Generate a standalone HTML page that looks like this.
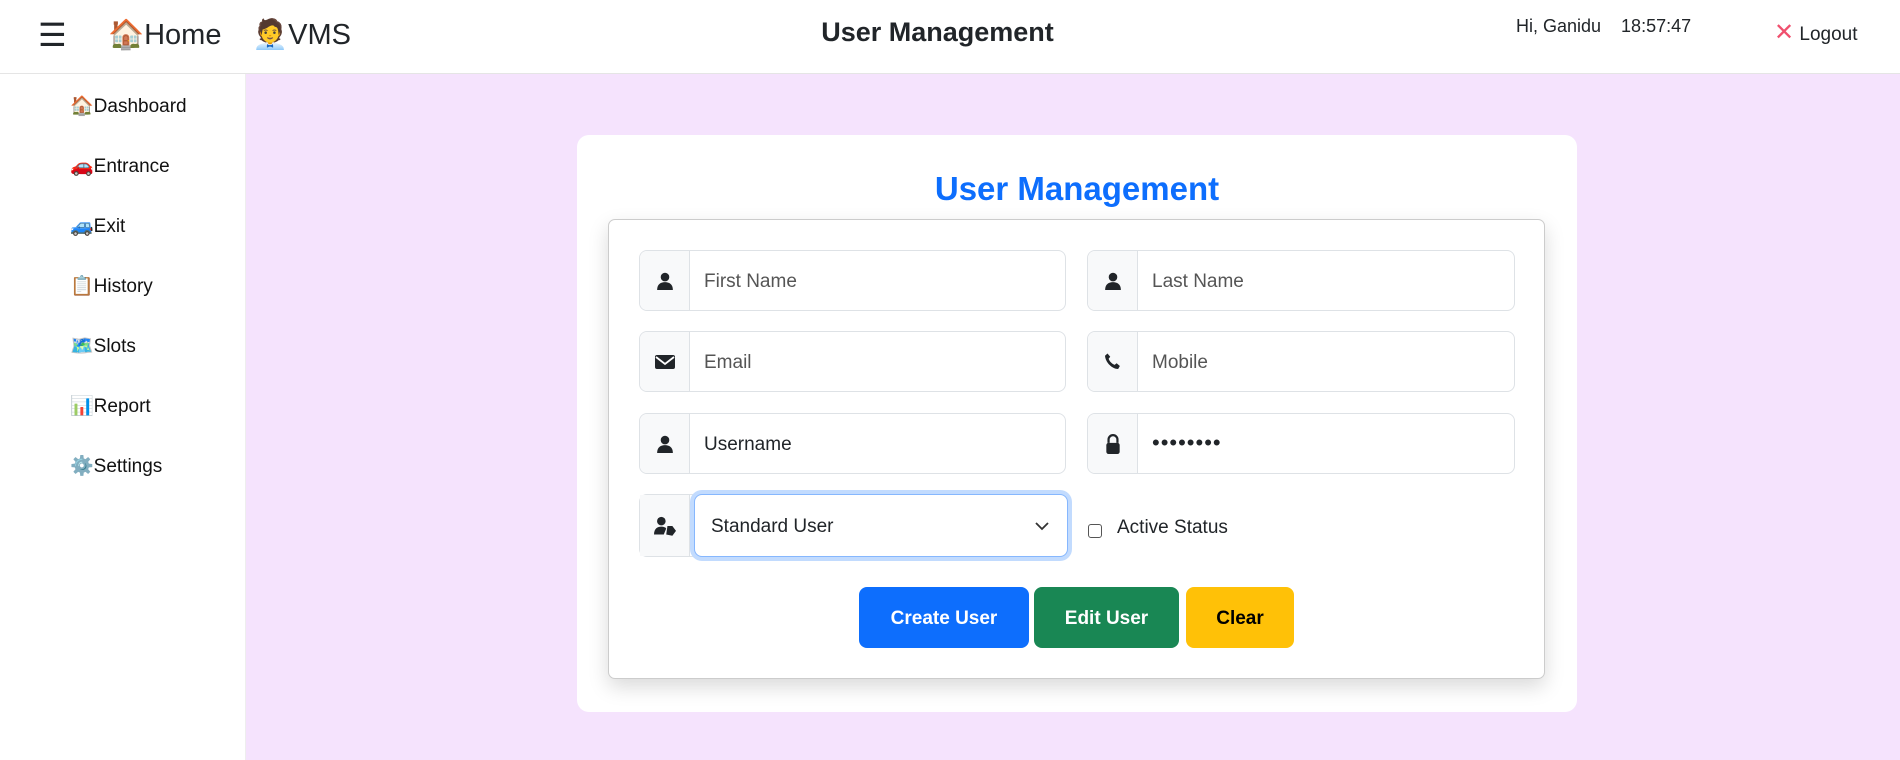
<!DOCTYPE html>
<html><head><meta charset="utf-8"><style>
*{box-sizing:border-box;margin:0;padding:0}
body{width:1900px;height:760px;overflow:hidden;font-family:"Liberation Sans","DejaVu Sans",sans-serif;background:#f5e3fd;color:#212529;position:relative}
.hdr{position:absolute;left:0;top:0;width:1900px;height:74px;background:#fff;border-bottom:1px solid #e5e5e5}
.side{position:absolute;left:0;top:74px;width:246px;height:686px;background:#fff;border-right:1px solid #eee}
.abs{position:absolute;white-space:nowrap}
.side .abs{left:70px;font-size:19px;color:#111}
.card{position:absolute;left:577px;top:135px;width:1000px;height:577px;background:#fff;border-radius:12px}
.inner{position:absolute;left:608px;top:219px;width:937px;height:460px;background:#fff;border:1px solid #ccc;border-radius:7px;box-shadow:0 8px 20px rgba(0,0,0,.15)}
.ig{position:absolute;height:61px;border:1px solid #dee2e6;border-radius:8px;background:#fff;overflow:hidden}
.ig .ad{position:absolute;left:0;top:0;width:50px;height:100%;background:#f8f9fa;border-right:1px solid #dee2e6;display:flex;align-items:center;justify-content:center}
.ig .tx{position:absolute;left:64px;top:1px;line-height:59px;font-size:19px;color:#555}
.btn{position:absolute;top:587px;height:61px;border-radius:8px;font-weight:bold;font-size:19px;display:flex;align-items:center;justify-content:center}
</style></head><body>
<div class="hdr">
 <div class="abs" style="left:38px;top:16px;font-size:32px">☰</div>
 <div class="abs" style="left:108px;top:18px;font-size:29px">🏠Home</div>
 <div class="abs" style="left:252px;top:18px;font-size:29px">🧑‍💼VMS</div>
 <div class="abs" style="left:0;width:1875px;text-align:center;top:17px;font-size:27px;font-weight:bold">User Management</div>
 <div class="abs" style="left:1516px;top:16px;font-size:18px">Hi, Ganidu &nbsp;&nbsp; 18:57:47</div>
 <div class="abs" style="left:1774px;top:18px;font-size:19px"><span style="color:#f0506e;font-weight:bold;font-size:24px">✕</span> Logout</div>
</div>
<div class="side">
 <div class="abs" style="top:20px">🏠Dashboard</div>
 <div class="abs" style="top:80px">🚗Entrance</div>
 <div class="abs" style="top:140px">🚙Exit</div>
 <div class="abs" style="top:200px">📋History</div>
 <div class="abs" style="top:260px">🗺️Slots</div>
 <div class="abs" style="top:320px">📊Report</div>
 <div class="abs" style="top:380px">⚙️Settings</div>
</div>
<div class="card"></div>
<div class="abs" style="left:577px;width:1000px;text-align:center;top:170px;font-size:33px;font-weight:bold;color:#0d6efd">User Management</div>
<div class="inner"></div>
<svg width="0" height="0" style="position:absolute"><defs>
<g id="u"><circle cx="8" cy="4.5" r="3.8"/><path d="M1 16c0-5 3-7 7-7s7 2 7 7z"/></g></defs></svg>
<div class="ig" style="left:639px;top:250px;width:427px"><div class="ad"><svg width="18" height="18" viewBox="0 0 16 16" fill="#212529"><use href="#u"/></svg></div><div class="tx">First Name</div></div>
<div class="ig" style="left:1087px;top:250px;width:428px"><div class="ad"><svg width="18" height="18" viewBox="0 0 16 16" fill="#212529"><use href="#u"/></svg></div><div class="tx">Last Name</div></div>
<div class="ig" style="left:639px;top:331px;width:427px"><div class="ad"><svg width="20" height="16" viewBox="0 0 20 16"><rect x="0" y="1" width="20" height="14" rx="2" fill="#212529"/><path d="M1 3l9 7 9-7" stroke="#fff" stroke-width="1.8" fill="none"/></svg></div><div class="tx">Email</div></div>
<div class="ig" style="left:1087px;top:331px;width:428px"><div class="ad"><svg width="20" height="20" viewBox="0 0 16 16" fill="#212529"><path d="M3.6 1.2l2.2 2.6-1.3 1.6c.8 2.2 2.6 4 4.8 4.9l1.6-1.3 2.6 2.2-1.4 2.4C7.3 13.6 2 8.4 1.6 3z"/></svg></div><div class="tx">Mobile</div></div>
<div class="ig" style="left:639px;top:413px;width:427px"><div class="ad"><svg width="18" height="18" viewBox="0 0 16 16" fill="#212529"><use href="#u"/></svg></div><div class="tx" style="color:#212529">Username</div></div>
<div class="ig" style="left:1087px;top:413px;width:428px"><div class="ad"><svg width="18" height="20" viewBox="0 0 16 18"><path d="M4 8V5a4 4 0 0 1 8 0v3" stroke="#212529" stroke-width="2" fill="none"/><rect x="2" y="8" width="12" height="10" rx="2" fill="#212529"/></svg></div><div class="tx" style="color:#212529;font-size:22px;letter-spacing:1px;top:-1px">••••••••</div></div>
<div class="ig" style="left:639px;top:494px;width:427px;height:63px;overflow:visible;border-color:#dee2e6"><div class="ad"><svg width="22" height="20" viewBox="0 0 18 16" fill="#212529"><circle cx="6" cy="4" r="3.5"/><path d="M0 15c0-5 3-6.5 6-6.5 2 0 3 .5 4 1.5l-2 5z"/><path d="M11 8h4l3 4-3 4-5-1z"/></svg></div>
 <div style="position:absolute;left:54px;top:-1px;width:374px;height:63px;border:1px solid #86b7fe;border-radius:8px;box-shadow:0 0 0 4px #c2dbfe;background:#fff"><span style="position:absolute;left:16px;top:21px;font-size:19px">Standard User</span><svg style="position:absolute;right:18px;top:26px" width="14" height="10" viewBox="0 0 14 10"><path d="M1 2l6 6 6-6" stroke="#333" stroke-width="1.8" fill="none"/></svg></div></div>
<div class="abs" style="left:1088px;top:524px;width:14px;height:14px;border:1px solid #555;border-radius:3px;background:#fff"></div>
<div class="abs" style="left:1117px;top:517px;font-size:19px">Active Status</div>
<div class="btn" style="left:859px;width:170px;background:#0d6efd;color:#fff;padding-top:3px">Create User</div>
<div class="btn" style="left:1034px;width:145px;background:#198754;color:#fff;padding-top:3px">Edit User</div>
<div class="btn" style="left:1186px;width:108px;background:#ffc107;color:#000;padding-top:3px">Clear</div>
</body></html>
